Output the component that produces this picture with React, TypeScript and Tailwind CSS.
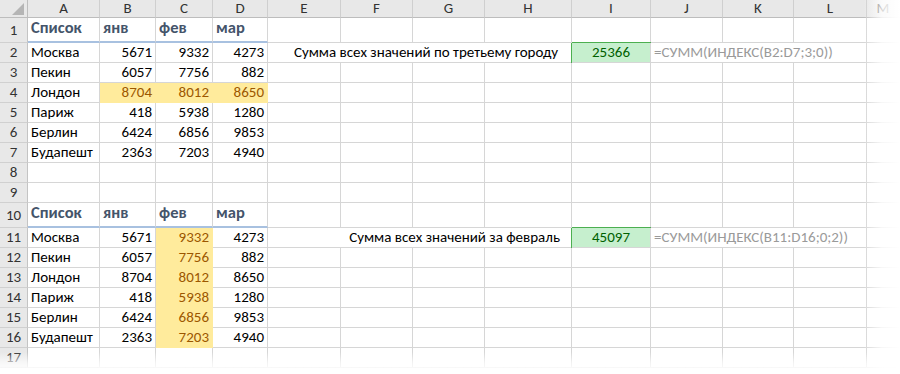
import React from 'react';
import clsx from 'clsx';

const FONT = { fontFamily: "Carlito, 'Liberation Sans', Arial, sans-serif" };

const letters = ['A', 'B', 'C', 'D', 'E', 'F', 'G', 'H', 'I', 'J', 'K', 'L', 'M'];

const cities: [string, number, number, number][] = [
  ['Москва', 5671, 9332, 4273],
  ['Пекин', 6057, 7756, 882],
  ['Лондон', 8704, 8012, 8650],
  ['Париж', 418, 5938, 1280],
  ['Берлин', 6424, 6856, 9853],
  ['Будапешт', 2363, 7203, 4940],
];

function Cell({ children, className }: { children?: React.ReactNode; className?: string }) {
  return (
    <div
      className={clsx(
        'flex items-center whitespace-nowrap px-[3px] border-r border-b border-[#d6d6d6] min-w-0',
        className
      )}
    >
      {children}
    </div>
  );
}

function RowNum({ n }: { n: number }) {
  return (
    <div className="flex items-center justify-center bg-[#e8e8e8] border-r border-r-[#c4c4c4] border-b border-b-[#d0d0d0] text-[#333] text-[15px]">
      {n}
    </div>
  );
}

function Empties({ count }: { count: number }) {
  return (
    <>
      {Array.from({ length: count }).map((_, i) => (
        <Cell key={i} />
      ))}
    </>
  );
}

function HeadRow({ r }: { r: number }) {
  return (
    <>
      <RowNum n={r} />
      {['Список', 'янв', 'фев', 'мар'].map((t) => (
        <Cell
          key={t}
          className="items-end pb-[1px] border-b-2 border-b-[#a8c1e0] text-[16.5px] font-bold text-[#44546a]"
        >
          {t}
        </Cell>
      ))}
      <Empties count={9} />
    </>
  );
}

function DataRow({
  r,
  city,
  hl,
  extra,
}: {
  r: number;
  city: [string, number, number, number];
  hl: number[];
  extra?: { label: string; pr: string; value: number; formula: string };
}) {
  const yellow = 'bg-[#ffeb9c] text-[#9c5700] border-[#ffeb9c]';
  return (
    <>
      <RowNum n={r} />
      <Cell>{city[0]}</Cell>
      {[1, 2, 3].map((i) => (
        <Cell key={i} className={clsx('justify-end', hl.includes(i) && yellow)}>
          {city[i]}
        </Cell>
      ))}
      {extra ? (
        <>
          <Cell className={clsx('col-span-4 justify-end', extra.pr)}>{extra.label}</Cell>
          <Cell className="justify-center bg-[#c6efce] text-[#006100] border-[#4caf50] shadow-[0_-1px_0_#4caf50,-1px_0_0_#4caf50]">
            {extra.value}
          </Cell>
          <Cell className="col-span-3 text-[#9a9a9a]">{extra.formula}</Cell>
          <Cell />
        </>
      ) : (
        <Empties count={9} />
      )}
    </>
  );
}

function EmptyRow({ r }: { r: number }) {
  return (
    <>
      <RowNum n={r} />
      <Empties count={13} />
    </>
  );
}

export default function App() {
  return (
    <div className="relative w-[900px] h-[374px] overflow-hidden bg-white text-black text-[15px]" style={FONT}>
      <div className="grid h-full grid-cols-[28px_72px_56px_57px_55px_73px_72px_72px_87px_79px_72px_71px_73px_1fr] grid-rows-[18px_25px_repeat(8,20px)_25px_repeat(7,20px)_1fr]">
        {/* column headers */}
        <div className="relative bg-[#e8e8e8] border-r border-b border-[#bdbdbd]">
          <svg className="absolute right-[3px] bottom-[2px]" width="12" height="12" viewBox="0 0 12 12">
            <polygon points="12,0 12,12 0,12" fill="#b5b5b5" />
          </svg>
        </div>
        {letters.map((l) => (
          <div
            key={l}
            className="flex items-center justify-center bg-[#e8e8e8] border-r border-r-[#cfcfcf] border-b border-b-[#bdbdbd] text-[#333] text-[15px]"
          >
            {l}
          </div>
        ))}

        <HeadRow r={1} />
        {cities.map((c, i) => (
          <DataRow
            key={'a' + i}
            r={i + 2}
            city={c}
            hl={i === 2 ? [1, 2, 3] : []}
            extra={
              i === 0
                ? {
                    label: 'Сумма всех значений по третьему городу',
                    pr: 'pr-[13px]',
                    value: 25366,
                    formula: '=СУММ(ИНДЕКС(B2:D7;3;0))',
                  }
                : undefined
            }
          />
        ))}
        <EmptyRow r={8} />
        <EmptyRow r={9} />
        <HeadRow r={10} />
        {cities.map((c, i) => (
          <DataRow
            key={'b' + i}
            r={i + 11}
            city={c}
            hl={[2]}
            extra={
              i === 0
                ? {
                    label: 'Сумма всех значений за февраль',
                    pr: 'pr-[11px]',
                    value: 45097,
                    formula: '=СУММ(ИНДЕКС(B11:D16;0;2))',
                  }
                : undefined
            }
          />
        ))}
        <EmptyRow r={17} />
      </div>

      {/* torn-edge fades */}
      <div className="pointer-events-none absolute right-0 top-0 h-full w-[36px] bg-gradient-to-r from-white/0 via-white/80 to-white" />
      <div className="pointer-events-none absolute bottom-0 left-0 w-full h-[22px] bg-gradient-to-b from-white/0 via-white/70 to-white" />
    </div>
  );
}
